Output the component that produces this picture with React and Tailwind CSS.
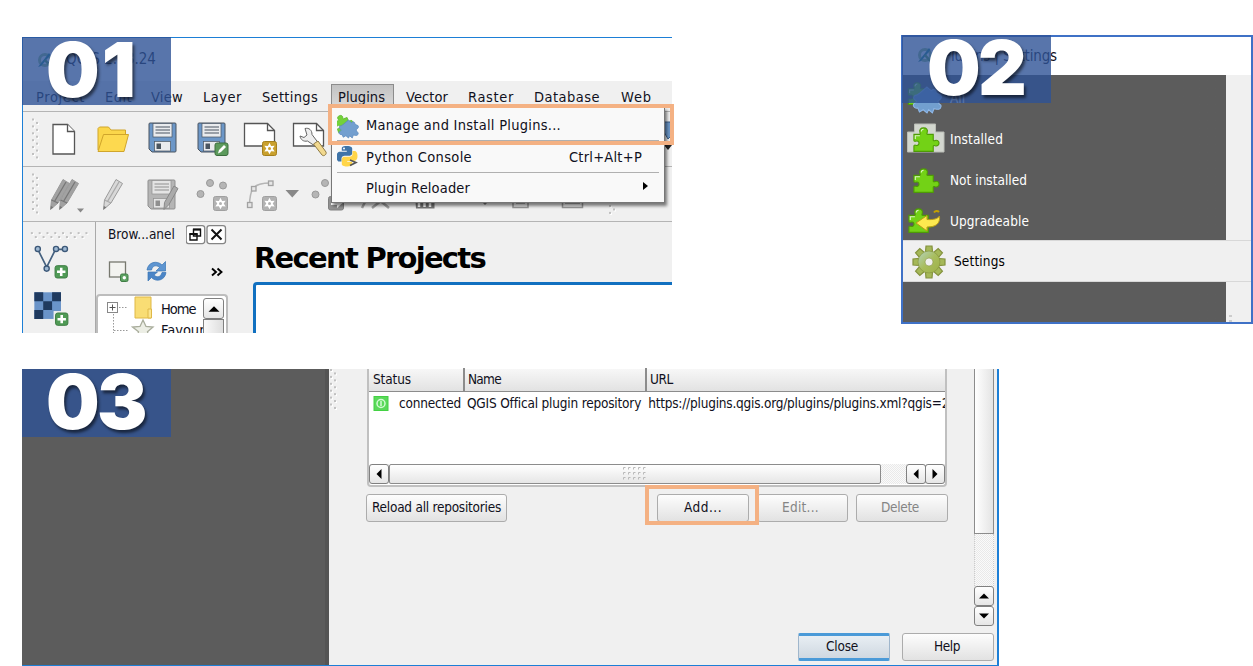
import { useLayoutEffect, useRef, useState } from "react";

const UI = "font-['DejaVu_Sans_Condensed','DejaVu_Sans',Tahoma,sans-serif]";

/* Text run that spreads its letters to fill a set width. */
function T({ w, children, className = "" }) {
  const ref = useRef(null);
  const [ls, setLs] = useState(0);
  useLayoutEffect(() => {
    const natural = ref.current.getBoundingClientRect().width;
    setLs((w - natural) / children.length);
  }, []);
  return (
    <span ref={ref} className={`inline-block shrink-0 whitespace-pre ${className}`} style={{ letterSpacing: `${ls}px` }}>
      {children}
    </span>
  );
}

/* Drawing surface; x and y set the origin of its user units. */
function S({ x = 0, y = 0, w, h, children, className = "" }) {
  return (
    <svg width={w} height={h} viewBox={`${x} ${y} ${w} ${h}`} className={`block shrink-0 ${className}`}>
      {children}
    </svg>
  );
}

function GripV({ x, y, n }) {
  return Array.from({ length: n }, (_, i) => {
    const gx = x + (i % 2 ? 4 : 0);
    const gy = y + i * 3.45;
    return (
      <g key={i}>
        <rect x={gx} y={gy} width="2" height="2" fill="#fff" />
        <rect x={gx - 1} y={gy - 1} width="2" height="2" fill="#c0c0c0" />
      </g>
    );
  });
}

function GripH({ x, y, n }) {
  return Array.from({ length: n }, (_, i) => {
    const gx = x + i * 3.95;
    const gy = y + (i % 2 ? 4 : 0);
    return (
      <g key={i}>
        <rect x={gx} y={gy} width="2" height="2" fill="#fff" />
        <rect x={gx - 1} y={gy - 1} width="2" height="2" fill="#c0c0c0" />
      </g>
    );
  });
}

function Badge({ children, className = "" }) {
  return (
    <div className={`absolute z-20 h-[68px] w-[149px] bg-[#2e5296]/80 font-[Inter,sans-serif] text-[75.500px] font-black leading-[66px] text-white [text-shadow:2px_3px_3px_rgba(0,0,0,0.55)] ${className}`}>
      {children}
    </div>
  );
}

function Floppy({ x, y, body, edge, pale }) {
  return (
    <g transform={`translate(${x} ${y})`}>
      <path d="M1.5 .5h25a1 1 0 0 1 1 1v27a1 1 0 0 1-1 1H3.5l-3-3v-25a1 1 0 0 1 1-1z" fill={body} stroke={edge} />
      <rect x="4.5" y="1" width="19" height="13.5" fill={pale} stroke={edge} strokeWidth=".7" />
      <path d="M7 4.5h14.5M7 7.5h14.5M7 10.5h14.5" stroke={edge} strokeWidth="1.1" />
      <rect x="6" y="19" width="16" height="9.5" fill={pale} stroke={edge} strokeWidth=".7" />
      <rect x="8" y="21" width="4.5" height="5.5" fill={edge} />
    </g>
  );
}

function StarTile({ x, y, fill, edge }) {
  return (
    <g transform={`translate(${x} ${y})`}>
      <rect x=".5" y=".5" width="14" height="14" rx="2" fill={fill} stroke={edge} />
      <path d="M7.5 1.8l1.6 3.2 3.6-.3-2 2.8 2 2.9-3.6-.2-1.6 3.1-1.6-3.1-3.6.2 2-2.9-2-2.8 3.6.3z" fill="#fff" />
      <circle cx="7.5" cy="7.6" r="1.5" fill={fill} />
    </g>
  );
}

function PlusTile({ x, y }) {
  return (
    <g transform={`translate(${x} ${y})`}>
      <rect x=".5" y=".5" width="12.5" height="12.5" rx="2.2" fill="#4f9a55" stroke="#3d7d43" />
      <path d="M6.75 2.5v8.5M2.5 6.75H11" stroke="#fff" strokeWidth="2.6" />
    </g>
  );
}

const PUZZLE =
  "M1 8h6c1 0 1-1 .6-2C6.500 3 8.500 1 11.500 1s5 2 3.900 5c-.4 1-.4 2 .6 2h6v6c0 1 1 1.200 2 .7 2-.9 4.300.3 4.300 2.800s-2.300 3.700-4.300 2.800c-1-.5-2-.3-2 .7v5.500H1v-6c0-.8 1-.9 2-.6 2 .6 3.500-.5 3.500-2.400S5 14.800 3 15.400c-1 .3-2 .2-2-.6z";

function Puzzle({ x, y, s = 1, fill = "#73d216", edge = "#4e9a06", rot = 0, shine = true }) {
  return (
    <g transform={`translate(${x} ${y}) scale(${s}) rotate(${rot} 14 14)`}>
      <path d={PUZZLE} fill={fill} stroke={edge} strokeWidth="1.200" />
      {shine && <path d="M2.500 13V9.500h5M9 5c0-1.700 1-2.600 2.500-2.600" fill="none" stroke="#fff" strokeOpacity=".75" strokeWidth="1.200" />}
    </g>
  );
}

/* Four-knobbed piece, centred on its origin. */
function RoundPiece({ x, y, s = 1, fill = "#739fcf", edge = "#5b89bd" }) {
  return (
    <g transform={`translate(${x} ${y}) scale(${s})`}>
      <path
        d="M0-12l4 3.500c1.500-2 5-1 4.500 2l3 1.500c2 0 2.500 3 .5 4.500l-2 1.500 1.500 3c2.500.5 1.500 4-.5 4.500-2 .5-3.500-.5-4.500-.5L5 12l-3.500-3L0 12l-3.500-3L-7 11l-1.500-3.500c-2 .5-5-1-4-3.500.5-1.500 2.500-1 3-2.500L-12-1c-1-2 .5-3.500 2.500-3.500l3-2z"
        fill={fill}
        stroke={edge}
      />
    </g>
  );
}

function QLogo({ x, y }) {
  return (
    <g transform={`translate(${x} ${y})`}>
      <circle cx="8" cy="8" r="5.500" fill="none" stroke="#8fbd7c" strokeWidth="3" />
      <path d="M1 15L12 1l1.500 2L4 14z" fill="#177f7c" />
      <path d="M8 8l6 7" stroke="#4f9c46" strokeWidth="2.500" />
    </g>
  );
}

function Arrow({ d, w = 18, h = 18, className = "" }) {
  const paths = {
    up: "M4 11.500h10L9 6.500z",
    down: "M4 6.500h10L9 11.500z",
    left: "M11.500 4v10L6.500 9z",
    right: "M6.500 4v10L11.500 9z",
  };
  return (
    <div className={`flex shrink-0 items-center justify-center rounded-[3px] border border-[#808080] bg-linear-to-b from-white to-[#e6e6e6] ${className}`}>
      <S w={w} h={h}><path d={paths[d]} fill="#000" /></S>
    </div>
  );
}

const MENU = [
  ["Project", 36, 49], ["Edit", 105, 27], ["View", 151, 32], ["Layer", 203, 39], ["Settings", 262, 56],
  ["Plugins", 338, 47], ["Vector", 406, 42], ["Raster", 468, 46], ["Database", 534, 66], ["Web", 621, 31],
];

function MenuBar() {
  return (
    <div className="flex h-[30px] shrink-0 items-center">
      {MENU.map(([label, x, w], i) => {
        const start = i === 0 ? 23 : x - 7;
        const end = i === MENU.length - 1 ? 672 : MENU[i + 1][1] - 7;
        return (
          <div key={label} className="flex h-full shrink-0 items-center pt-0.5" style={{ width: end - start }}>
            {label === "Plugins" ? (
              <div className="flex h-[27px] w-[63px] items-center border border-[#8c8c8c] bg-linear-to-b from-[#c2c2c2] to-[#dcdcdc] pl-1.5">
                <T w={w}>{label}</T>
              </div>
            ) : (
              <div className="flex" style={{ paddingLeft: x - start }}><T w={w}>{label}</T></div>
            )}
          </div>
        );
      })}
    </div>
  );
}

function FileToolbar() {
  return (
    <div className="flex h-[55px] shrink-0 border-b border-[#b4b4b4]">
      <S x={23} y={112} w={27} h={54}><GripV x={33} y={119.500} n={12} /></S>
      <S x={50} y={112} w={40} h={54}>
        <path d="M53 124.500h14.500l7 7v22.500h-21.500z" fill="#fff" stroke="#555" strokeWidth="1.300" />
        <path d="M67.500 124.500v7h7" fill="#fff" stroke="#555" strokeWidth="1.300" />
      </S>
      <S x={90} y={112} w={50} h={54}>
        <path d="M98 150v-21.500l1.500-1.500h9l2.500 3h14.500v5" fill="#fbd64a" stroke="#d0a52b" />
        <path d="M98 151.500l5.500-17h25l-4.500 17z" fill="#fdd94f" stroke="#d0a52b" />
      </S>
      <S x={140} y={112} w={50} h={54}><Floppy x={148.500} y={122.500} body="#6c97c8" edge="#4a5560" pale="#e9ebee" /></S>
      <S x={190} y={112} w={47} h={54}>
        <Floppy x={197.500} y={122.500} body="#6c97c8" edge="#4a5560" pale="#e9ebee" />
        <rect x="215" y="143" width="13" height="12.500" rx="2" fill="#5c9a5c" stroke="#3c6e3e" />
        <path d="M218 153.500l1-3.500 5-5 2 2-5 5z" fill="#fff" />
      </S>
      <S x={237} y={112} w={48} h={54}>
        <path d="M244.500 123.500h23l7 7v15.500h-30z" fill="#fff" stroke="#555" strokeWidth="1.300" />
        <path d="M267.500 123.500v7h7" fill="none" stroke="#555" strokeWidth="1.300" />
        <StarTile x={262} y={141} fill="#c9a02d" edge="#a5801c" />
      </S>
      <S x={285} y={112} w={47} h={54}>
        <path d="M293.500 123.500h23l7 7v15.500h-30z" fill="#fff" stroke="#555" strokeWidth="1.300" />
        <path d="M316.500 123.500v7h7" fill="none" stroke="#555" strokeWidth="1.300" />
        <path d="M305 128.500c4-1 7 1.500 7 6l6 8-3 3.500-7.500-5c-4 1-7-1.500-7.500-5l4 1.500 3-2.500z" fill="#eee" stroke="#666" />
        <path d="M313.500 144l4.500-3 8 11c1 2-2 5-4 3z" fill="#f2d98f" stroke="#8f7b45" />
      </S>
      <S x={664} y={112} w={8} h={54} className="ml-[332px]">
        <path d="M664 122h6l2 5v8l-4 4-4-7z" fill="#6c97c8" stroke="#3c5f88" />
        <path d="M664 145h8l-4 5z" fill="#222" />
      </S>
    </div>
  );
}

function GrayPencil({ x, y, tone, light }) {
  return (
    <g transform={`translate(${x} ${y})`}>
      <path d="M14 .5l6.500 4L9 24l-7.500 6.500L2.500 21z" fill={tone} stroke="#9a9a9a" />
      <path d="M17 3L5.500 22.500M2.500 21l6.500 3" stroke={light} strokeWidth="1.300" />
      <path d="M1.500 30.500l.4-3.500 2.500 1.200z" fill="#777" />
    </g>
  );
}

function EditToolbar() {
  return (
    <div className="flex h-[55px] shrink-0 border-b border-[#b4b4b4]">
      <S x={23} y={167} w={22} h={54}><GripV x={33} y={174.500} n={12} /></S>
      <S x={45} y={167} w={45} h={54}>
        <GrayPencil x={49} y={179} tone="#a2a2a2" light="#777" />
        <GrayPencil x={58} y={179} tone="#a2a2a2" light="#777" />
        <path d="M77 208.500h7l-3.500 4z" fill="#888" />
      </S>
      <S x={90} y={167} w={50} h={54}><GrayPencil x={102} y={179} tone="#d8d8d8" light="#aaa" /></S>
      <S x={140} y={167} w={50} h={54}>
        <Floppy x={147.500} y={179.500} body="#b5b5b5" edge="#8f8f8f" pale="#e4e4e4" />
        <path d="M174 186l4 2.500-9 16-5 5 .5-7z" fill="#aaa" stroke="#888" />
      </S>
      <S x={190} y={167} w={47} h={54}>
        <g fill="#b5b5b5" stroke="#999">
          <circle cx="210" cy="183" r="3.500" /><circle cx="223" cy="185.500" r="3.500" /><circle cx="200.500" cy="194" r="3.500" />
        </g>
        <StarTile x={213} y={196} fill="#b2b2b2" edge="#a0a0a0" />
      </S>
      <S x={237} y={167} w={48} h={54}>
        <path d="M249.500 206c0-8 1-14 4-18s9-5 17-5" fill="none" stroke="#b5b5b5" strokeWidth="1.500" />
        <g fill="#e6e6e6" stroke="#a2a2a2" strokeWidth="1.300">
          <rect x="268.500" y="181" width="4.500" height="4.500" /><rect x="251.500" y="186.500" width="4.500" height="4.500" /><rect x="247.500" y="202.500" width="4.500" height="5" />
        </g>
        <StarTile x={262} y={196} fill="#b2b2b2" edge="#a0a0a0" />
      </S>
      <S x={285} y={167} w={21} h={54}><path d="M285.500 190h13.500l-6.700 7.500z" fill="#888" /></S>
      <S x={306} y={167} w={54} h={54}>
        <g fill="#b5b5b5" stroke="#999">
          <circle cx="325" cy="183" r="3.500" /><circle cx="315.500" cy="194.500" r="3.500" />
        </g>
        <rect x="328.500" y="196.500" width="15" height="13.500" rx="2" fill="#939393" stroke="#808080" />
        <path d="M331 200h6v-3l6 5.500-6 5.500v-3h-6z" fill="#fff" />
      </S>
      <S x={360} y={167} w={312} h={54}>
        <path d="M362 208l4-8M372 208l10-8M378 199l11 9" stroke="#a0a0a0" strokeWidth="2.500" />
        <path d="M415 195h19.500v13.500H416z" fill="#777" />
        <path d="M419 202v5M424.500 202v5M430 202v5" stroke="#fff" strokeWidth="2.500" />
        <path d="M481 201h8l-4 4z" fill="#777" />
        <path d="M513 195h15v12.500h-15zM562.500 195h20v12.500h-20z" fill="#eee" stroke="#999" strokeWidth="1.500" />
        <path d="M516 203.500h9M565 203.500h15" stroke="#aaa" />
        <GripV x={610} y={206} n={3} />
      </S>
    </div>
  );
}

function PanelBody() {
  return (
    <div className="flex min-h-0 flex-1 overflow-hidden">
      <S x={23} y={222} w={73} h={111} className="border-r border-[#a9a9a9]">
        <GripH x={32} y={232.500} n={15} />
        <path d="M38 249l9 18 9-18h9" fill="none" stroke="#45617f" strokeWidth="1.700" />
        <g fill="#9fb9d3" stroke="#3c5878" strokeWidth="1.400">
          <circle cx="38" cy="248.500" r="2.600" /><circle cx="47" cy="268.500" r="2.600" /><circle cx="56.500" cy="248.500" r="2.600" /><circle cx="65.500" cy="248.500" r="2.600" />
        </g>
        <PlusTile x={55} y={265} />
        <rect x="34.500" y="292.500" width="27" height="27" fill="#6a94c9" />
        <path d="M34.500 292.500h9v9h-9zM52.500 292.500h9v9h-9zM43.500 301.500h9v9h-9zM34.500 310.500h9v9h-9z" fill="#1f3a5f" />
        <path d="M54 311.500h10V320H54z" fill="#f0f0f0" />
        <PlusTile x={55.500} y={313} />
      </S>
      <div className="flex w-[133px] shrink-0 flex-col">
        <div className="flex h-[26px] shrink-0 items-center pl-3 text-[13.500px]">
          <T w={67}>Brow...anel</T>
          <S x={187} y={222} w={42} h={26} className="ml-[11px]">
            <g fill="#fff" stroke="#858585" strokeWidth="1.300">
              <rect x="187.200" y="225.600" width="18.500" height="18" rx="2.500" /><rect x="208" y="225.600" width="18.500" height="18" rx="2.500" />
            </g>
            <path d="M194.500 229.500h7v6.500h-7zM191 234h7v6h-7z" fill="#fff" stroke="#111" strokeWidth="1.400" />
            <path d="M194 229.500h8M190.500 234h8" stroke="#111" strokeWidth="2.200" />
            <path d="M212.500 229.500l10 10m0-10l-10 10" stroke="#111" strokeWidth="2" />
          </S>
        </div>
        <S x={96} y={248} w={133} h={46}>
          <rect x="109.500" y="262" width="16" height="15" fill="#f3f3f0" stroke="#77786f" strokeWidth="1.300" />
          <rect x="120.500" y="274" width="7.500" height="7.500" rx="1.500" fill="#5da262" stroke="#3f7d45" />
          <circle cx="124.300" cy="277.800" r="1.700" fill="#fff" />
          <path d="M147 270c1-8 10-10 15-5l3.500-3.500v9.500H156l3.500-3.500c-3-3-7-2-8 2.500z" fill="#5e95d1" stroke="#3a76b5" strokeWidth=".7" />
          <path d="M166 272.500c-1 8-10 10-14.500 5l-3.500 3.500v-9h9.500l-3.500 3c3 3 7 2 8-2.500z" fill="#4b85c7" stroke="#3a76b5" strokeWidth=".7" />
          <path d="M212 268.500l4 3.500-4 3.500M217.500 268.500l4 3.500-4 3.500" fill="none" stroke="#000" strokeWidth="1.900" />
        </S>
        <div className="flex h-[60px] w-[132px] shrink-0 rounded-t border-2 border-b-0 border-[#bdbdbd] bg-white">
          <S x={98} y={296} w={61} h={50}>
            <rect x="107.500" y="302.500" width="10" height="10" fill="#fff" stroke="#888" />
            <path d="M109.500 307.500h6M112.500 304.500v6" stroke="#555" />
            <path d="M119 307.500h9M113.500 314v20M114 330.500h14" stroke="#999" strokeDasharray="1.500 1.500" />
            <path d="M135 297h16v21h-16z" fill="#f9dd74" stroke="#dfb847" />
            <path d="M148 309h3.500v9H148z" fill="#fbe58f" stroke="#dfb847" />
            <path d="M143 320l3 6.500 7 .6-5.500 4.700 2 7.200-6.500-4-6.500 4 2-7.200-6-4.700 7.500-.6z" fill="#eceee5" stroke="#a9ad9c" strokeWidth="1.300" />
          </S>
          <div className="flex w-[44px] shrink-0 flex-col overflow-hidden pl-0.5 pt-[5px] text-[14.500px] leading-[17px]">
            <T w={38}>Home</T>
            <span className="mt-1 whitespace-nowrap">Favourites</span>
          </div>
          <div className="flex flex-col">
            <Arrow d="up" className="mt-0.5 h-[21px] w-[21px] [&>svg]:scale-110" />
            <div className="flex-1 border border-[#808080] bg-linear-to-r from-[#fafafa] to-[#dedede]" />
          </div>
        </div>
      </div>
      <div className="flex min-w-0 flex-1 flex-col pl-6">
        <div className="flex h-[60px] shrink-0 items-center pl-px pt-3 font-['DejaVu_Sans',Verdana,sans-serif] text-[29px] font-bold text-black"><T w={231}>Recent Projects</T></div>
        <div className="flex-1 rounded-tl border-l-[3px] border-t-[3px] border-[#1170c0] bg-white" />
      </div>
    </div>
  );
}

function PluginsMenu() {
  return (
    <div className="absolute left-[308px] top-[69px] z-10 flex h-[96px] w-[334px] flex-col border border-[#777] bg-[#f9f9f9] px-[5px] shadow-[2px_3px_3px_rgba(0,0,0,0.5)]">
      <div className="flex h-[33px] shrink-0 items-center border-b border-[#b0b0b0] pt-[3px]">
        <S w={29} h={32}>
          <Puzzle x={-2} y={4} s={0.620} fill="#73d23a" edge="#5ab52a" rot={-20} shine={false} />
          <RoundPiece x={11.500} y={19} s={0.750} />
        </S>
        <T w={195}>Manage and Install Plugins...</T>
      </div>
      <div className="flex h-[32px] shrink-0 items-center border-b border-[#b0b0b0]">
        <S w={29} h={31}>
          <path d="M9.500 5c-5 0-4.700 2.200-4.700 2.200v2.600h5v.9H3S-.5 10.300-.5 15.600s3 5 3 5h2v-2.800s0-3 3-3h5s2.700 0 2.700-2.700V7.500S15.500 5 9.500 5z" fill="#3f74a8" />
          <circle cx="7" cy="7.500" r="1" fill="#fff" />
          <path d="M10.500 25.500c5 0 4.700-2.200 4.700-2.200v-2.500h-5v-.9H17s3.500.4 3.500-4.800-3-5-3-5h-2v2.600s.2 3-3 3h-5s-2.700 0-2.700 2.800v4.500s-.4 2.500 5.700 2.500z" fill="#ffd548" />
          <path d="M13 19l6 2.500-6 3" fill="none" stroke="#555" strokeWidth="1.600" />
        </S>
        <T w={106} className="pt-0.5">Python Console</T>
        <T w={73} className="ml-[97px] pt-0.5">Ctrl+Alt+P</T>
      </div>
      <div className="flex h-[30px] shrink-0 items-center pl-[29px]">
        <T w={104}>Plugin Reloader</T>
        <S w={8} h={10} className="ml-[172px] mb-1"><path d="M1 1v8l5-4z" fill="#000" /></S>
      </div>
    </div>
  );
}

function MainWindow() {
  return (
    <section className="relative mt-[37px] flex h-[296px] w-[650px] shrink-0 flex-col border-l border-t border-[#1d7fd6] bg-[#f0f0f0] text-[14.500px] text-[#101020]">
      <div className="flex h-[43px] shrink-0 items-center bg-white pl-[13px]">
        <S w={30} h={20}><QLogo x={1} y={2} /></S>
        <T w={90} className="text-[15px]">QGIS 2.18.24</T>
      </div>
      <MenuBar />
      <div className="h-px shrink-0 bg-[#b4b4b4]" />
      <FileToolbar />
      <EditToolbar />
      <PanelBody />
      <PluginsMenu />
      <div className="absolute left-[305px] top-[66px] z-10 h-[41px] w-[346px] border-4 border-[#f4b183]" />
      <Badge className="-left-px -top-px pl-6">
        <T w={92}>01</T>
      </Badge>
    </section>
  );
}

function SideRow({ icon, label, w, className = "h-[41px] pt-1" }) {
  return (
    <div className={`flex shrink-0 items-center ${className}`}>
      <S w={47} h={41} className="-mt-1">{icon}</S>
      <T w={w}>{label}</T>
    </div>
  );
}

function PluginSettings() {
  const teeth = [0, 45, 90, 135, 180, 225, 270, 315];
  return (
    <section className="relative mt-[35px] flex h-[289px] w-[352px] shrink-0 flex-col border-[2.500px] border-[#3f71c6] bg-[#f0f0f0] text-[13.500px]">
      <div className="flex h-[38px] shrink-0 items-center bg-white pl-[13px] text-[15px] text-[#101020]">
        <S w={27} h={20}><QLogo x={1} y={1} /></S>
        <T w={114}>Plugins | Settings</T>
      </div>
      <div className="flex min-h-0 flex-1 flex-col bg-linear-to-r from-[#5c5c5c] from-[323px] to-[#f0f0f0] to-[323px] text-white">
        <SideRow label="All" w={15} className="h-[42px] pt-1.5" icon={<><Puzzle x={4.500} y={5} s={0.850} /><RoundPiece x={24} y={23} s={1.080} fill="#729fcf" edge="#8fb8e8" /></>} />
        <SideRow label="Installed" w={53} icon={<><path d="M11.500 7h21v8H41v20H4.500V15h7z" fill="#d3d7cf" stroke="#babdb6" /><Puzzle x={10} y={10} s={0.920} /></>} />
        <SideRow label="Not installed" w={77} icon={<Puzzle x={10} y={10} s={0.920} />} />
        <SideRow
          label="Upgradeable" w={79}
          icon={<><Puzzle x={5} y={9} s={0.920} /><path d="M13 24l11-7.500V20.500c7 .5 11-1 12.500-3.500 1 8-4 11-12.500 11v4z" fill="#fce94f" stroke="#b99a18" /><path d="M31 13.500c1.500-2 3.500-2 5-.5" fill="none" stroke="#c4a000" strokeWidth="2" /></>}
        />
        <div className="flex h-[42px] shrink-0 items-center border-y border-[#d8d8d8] bg-[#f0f0f0] pl-px text-black">
          <S w={50} h={41}>
            <defs><linearGradient id="gear" x1="0" y1="0" x2="1" y2="1"><stop offset="0" stopColor="#b5d3bf" /><stop offset=".5" stopColor="#a8bd5c" /><stop offset="1" stopColor="#9db048" /></linearGradient></defs>
            <g stroke="#84923e" strokeWidth="1.200" fill="#a5b858">
              {teeth.map((a) => <path key={a} d="M21.500 11l.5-6h6l.5 6z" transform={`rotate(${a} 25 21)`} />)}
            </g>
            <path fillRule="evenodd" d="M25 10a11 11 0 1 0 0 22 11 11 0 0 0 0-22zm0 7a4 4 0 1 1 0 8 4 4 0 0 1 0-8z" fill="url(#gear)" stroke="#84923e" strokeWidth=".6" />
          </S>
          <T w={51} className="pt-0.5">Settings</T>
        </div>
        <div className="flex flex-1 items-end justify-end pr-[19px]"><S w={3} h={8}><path d="M0 1h3v2H0zM0 6h3v2H0z" fill="#ccc" /></S></div>
      </div>
      <Badge className="-left-px -top-[2px] w-[148px] pl-[25px] leading-[62px]">
        <T w={97}>02</T>
      </Badge>
    </section>
  );
}

const BTN = "flex h-[28px] shrink-0 items-center justify-center rounded-[3px] border border-[#acacac] bg-linear-to-b from-[#fdfdfd] to-[#e2e2e2]";
const TRACK = "bg-[repeating-conic-gradient(#e9e9e9_0_25%,#fafafa_0_50%)] bg-[length:2px_2px]";

function RepositoryTable() {
  return (
    <div className="flex h-[118px] w-[580px] shrink-0 flex-col rounded-b border-2 border-t-0 border-[#c0c0c0] bg-white">
      <div className="flex h-[23px] shrink-0 items-center border-b border-[#8c8c8c] bg-linear-to-b from-[#f7f7f7] to-[#e2e2e2] pb-px">
        <div className="flex h-[23px] w-[96px] shrink-0 items-center border-r-2 border-[#8c8c8c] pl-1"><T w={38}>Status</T></div>
        <div className="flex h-[23px] w-[182px] shrink-0 items-center border-r-2 border-[#8c8c8c] pl-[3px]"><T w={33}>Name</T></div>
        <div className="pl-[3px]"><T w={23}>URL</T></div>
      </div>
      <div className="flex h-[21px] shrink-0 items-center leading-[20px]">
        <S w={30} h={18}>
          <rect x="5" y="2.500" width="14" height="14" fill="#5ad95a" stroke="#43d143" />
          <circle cx="12" cy="9.500" r="4" fill="none" stroke="#d4fbd4" strokeWidth="1.500" />
          <path d="M12 7v5" stroke="#d4fbd4" strokeWidth="1.500" />
        </S>
        <T w={62}>connected</T>
        <T w={174} className="ml-[6px]">QGIS Offical plugin repository</T>
        <div className="ml-[7px] w-[297px] overflow-hidden"><T w={301}>https://plugins.qgis.org/plugins/plugins.xml?qgis=2</T></div>
      </div>
      <div className="flex-1" />
      <div className={`flex h-5 shrink-0 ${TRACK}`}>
        <Arrow d="left" className="w-[20px]" />
        <div className="flex w-[492px] items-center justify-center rounded-xs border border-[#8c8c8c] bg-linear-to-b from-white to-[#e6e6e6]">
          <S w={24} h={14}>
            {[0, 1, 2].map((r) => [0, 1, 2, 3, 4].map((c) => <path key={`${r}${c}`} d={`M${c * 5 + 0.500} ${r * 5 + 2.500}v-2h2`} fill="none" stroke="#b9b9b9" />))}
          </S>
        </div>
        <div className="flex-1" />
        <Arrow d="left" className="w-[20px]" />
        <Arrow d="right" className="-ml-px w-[20px]" />
      </div>
      <div className="h-px" />
    </div>
  );
}

function RepositoryPanel() {
  return (
    <section className="relative ml-[22px] mt-9 flex h-[297px] w-[977px] shrink-0 border-b border-r-2 border-[#1d7fd6] bg-[#f0f0f0] text-[13.500px] text-[#101020]">
      <div className="w-[307px] shrink-0 border-r-4 border-[#545454] bg-[#5c5c5c]" />
      <S x={331} y={369} w={38} h={60}><GripV x={333} y={370} n={12} /></S>
      <div className="flex w-[581px] shrink-0 flex-col">
        <RepositoryTable />
        <div className="relative -ml-px mt-[7px] flex shrink-0">
          <div className={`${BTN} w-[141px]`}><T w={129}>Reload all repositories</T></div>
          <div className={`${BTN} ml-[150px] w-[92px]`}><T w={38}>Add...</T></div>
          <div className={`${BTN} ml-2 w-[91px] border-[#8f8f8f] pr-1 text-[#858585]`}><T w={37}>Edit...</T></div>
          <div className={`${BTN} ml-2 w-[92px] border-[#8f8f8f] pr-1 text-[#858585]`}><T w={38}>Delete</T></div>
          <div className="absolute -top-[9px] left-[279px] h-[40px] w-[114px] border-4 border-[#f4b183]" />
        </div>
        <div className="mt-[111px] flex w-[627px] justify-end gap-3">
          <div className="flex h-[28px] w-[92px] items-center justify-center rounded-xs border-x border-y-[3px] border-x-[#9fb6cc] border-y-[#4a9ad8] bg-linear-to-b from-[#e8eef3] to-[#cfd8e1] pr-1"><T w={32}>Close</T></div>
          <div className={`${BTN} w-[92px] pr-0.5`}><T w={26}>Help</T></div>
        </div>
      </div>
      <div className={`ml-[26px] flex h-[257px] w-5 shrink-0 flex-col ${TRACK}`}>
        <div className="h-[165px] border border-t-0 border-[#8c8c8c] bg-linear-to-r from-white to-[#e4e4e4]" />
        <div className="flex-1 border-x border-dotted border-[#ccc]" />
        <Arrow d="up" className="h-5" />
        <Arrow d="down" className="h-5" />
      </div>
      <Badge className="left-0 top-0 pl-6">
        <T w={99}>03</T>
      </Badge>
    </section>
  );
}

export default function App() {
  return (
    <main className={`flex h-[666px] w-[1253px] flex-col overflow-hidden bg-white leading-none ${UI}`}>
      <div className="flex h-[333px] shrink-0 pl-[22px]">
        <MainWindow />
        <div className="w-[229px] shrink-0" />
        <PluginSettings />
      </div>
      <RepositoryPanel />
    </main>
  );
}
